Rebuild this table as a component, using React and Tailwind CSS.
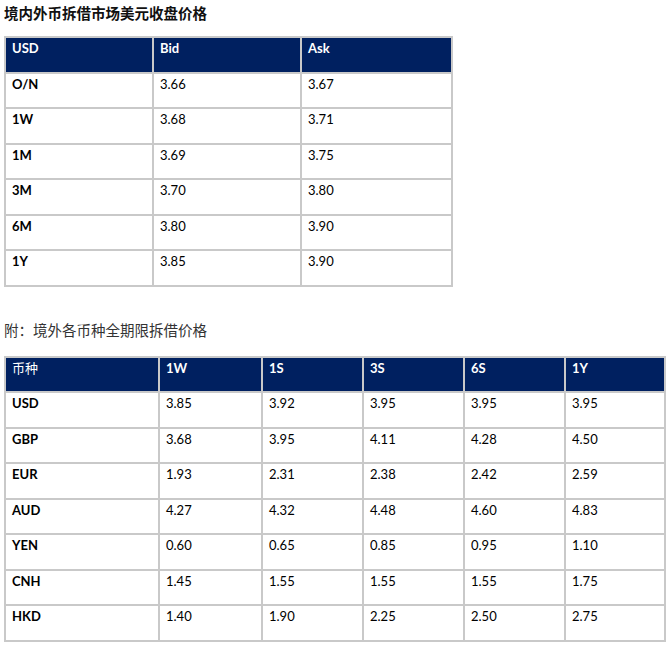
import React from "react";

const usdRows = [
  ["O/N", "3.66", "3.67"],
  ["1W", "3.68", "3.71"],
  ["1M", "3.69", "3.75"],
  ["3M", "3.70", "3.80"],
  ["6M", "3.80", "3.90"],
  ["1Y", "3.85", "3.90"],
];

const allRows = [
  ["USD", "3.85", "3.92", "3.95", "3.95", "3.95"],
  ["GBP", "3.68", "3.95", "4.11", "4.28", "4.50"],
  ["EUR", "1.93", "2.31", "2.38", "2.42", "2.59"],
  ["AUD", "4.27", "4.32", "4.48", "4.60", "4.83"],
  ["YEN", "0.60", "0.65", "0.85", "0.95", "1.10"],
  ["CNH", "1.45", "1.55", "1.55", "1.55", "1.75"],
  ["HKD", "1.40", "1.90", "2.25", "2.50", "2.75"],
];

const font = { fontFamily: "Lato, 'Noto Sans CJK SC', sans-serif" };

function Head({ children, w, cjk }) {
  return (
    <th
      className={`h-[35.5px] border-2 border-[#c9c9c9] bg-[#002060] px-[6px] pt-[1px] align-top text-left text-[13px] text-white ${cjk ? "font-normal" : "font-bold"} ${w}`}
    >
      {children}
    </th>
  );
}

function Cell({ children, bold }) {
  return (
    <td
      className={`h-[35.5px] border-2 border-[#c9c9c9] px-[6px] pt-[1px] align-top text-[13px] text-black ${bold ? "font-bold" : "font-normal"}`}
    >
      {children}
    </td>
  );
}

export default function App() {
  return (
    <div className="min-h-screen bg-white pl-[4px] pt-[3px]" style={font}>
      <h1
        className="text-[14.5px] font-semibold leading-[20px] text-[#111]"
        style={{ fontFamily: "'Noto Sans CJK SC', sans-serif" }}
      >
        境内外币拆借市场美元收盘价格
      </h1>

      <table className="mt-[13px] w-[447px] border-collapse table-fixed">
        <thead>
          <tr>
            <Head w="w-[148px]">USD</Head>
            <Head w="w-[148px]">Bid</Head>
            <Head w="w-[151px]">Ask</Head>
          </tr>
        </thead>
        <tbody>
          {usdRows.map((r) => (
            <tr key={r[0]}>
              <Cell bold>{r[0]}</Cell>
              <Cell>{r[1]}</Cell>
              <Cell>{r[2]}</Cell>
            </tr>
          ))}
        </tbody>
      </table>

      <p
        className="mt-[33px] text-[14.5px] leading-[20px] text-[#333]"
        style={{ fontFamily: "'Noto Sans CJK SC', sans-serif" }}
      >
        附：境外各币种全期限拆借价格
      </p>

      <table className="mt-[16px] w-[660px] border-collapse table-fixed">
        <thead>
          <tr>
            <Head w="w-[154px]" cjk>
              币种
            </Head>
            <Head w="w-[103px]">1W</Head>
            <Head w="w-[101px]">1S</Head>
            <Head w="w-[101px]">3S</Head>
            <Head w="w-[101px]">6S</Head>
            <Head w="w-[100px]">1Y</Head>
          </tr>
        </thead>
        <tbody>
          {allRows.map((r) => (
            <tr key={r[0]}>
              {r.map((v, i) => (
                <Cell key={i} bold={i === 0}>
                  {v}
                </Cell>
              ))}
            </tr>
          ))}
        </tbody>
      </table>
    </div>
  );
}
